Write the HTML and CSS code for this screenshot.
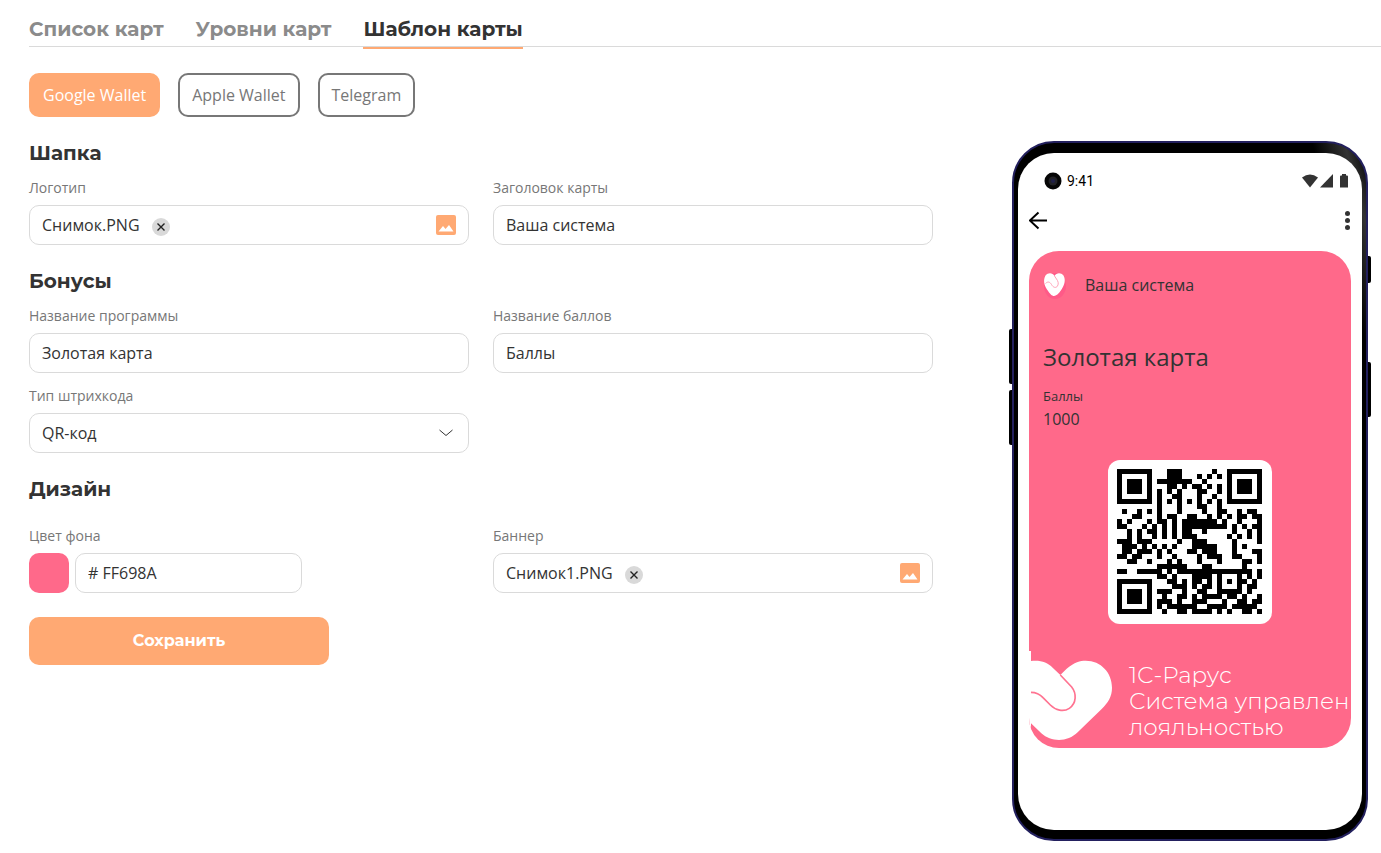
FILE: index.html
```html
<!DOCTYPE html>
<html lang="ru">
<head>
  <meta charset="UTF-8">
  <meta name="viewport" content="width=device-width, initial-scale=1.0">
  <title>Шаблон карты</title>
  <link rel="stylesheet" href="styles.css">
</head>
<body>
  <nav class="tabs">
    <a class="tab" href="#list">Список карт</a>
    <a class="tab" href="#levels">Уровни карт</a>
    <a class="tab tab-active" href="#template">Шаблон карты</a>
  </nav>

  <div class="wallets">
    <button class="wallet wallet-active" type="button">Google Wallet</button>
    <button class="wallet" type="button">Apple Wallet</button>
    <button class="wallet" type="button">Telegram</button>
  </div>

  <main class="content">
    <form class="form" id="templateForm">
      <!-- Шапка -->
      <h2>Шапка</h2>
      <div class="grid">
        <div class="field">
          <label for="logo">Логотип</label>
          <div class="file-box">
            <span>Снимок.PNG</span>
            <button class="clear" type="button" aria-label="Удалить логотип">
              <svg width="8" height="8" viewBox="0 0 8 8"><path d="M0.5 0.5 7.5 7.5M7.5 0.5 0.5 7.5"/></svg>
            </button>
            <label class="pick" for="logo" aria-label="Выбрать файл">
              <svg width="20" height="20" viewBox="0 0 20 20"><rect width="20" height="20" rx="2"/><path d="M2.5 16.5 7 11l2.500 3L13 10l4.500 6.500z"/></svg>
            </label>
            <input class="hidden-file" type="file" id="logo" name="logo">
          </div>
        </div>
        <div class="field">
          <label for="cardTitle">Заголовок карты</label>
          <input class="input" type="text" id="cardTitle" name="cardTitle" value="Ваша система">
        </div>
      </div>

      <!-- Бонусы -->
      <h2>Бонусы</h2>
      <div class="grid">
        <div class="field">
          <label for="program">Название программы</label>
          <input class="input" type="text" id="program" name="program" value="Золотая карта">
        </div>
        <div class="field">
          <label for="points">Название баллов</label>
          <input class="input" type="text" id="points" name="points" value="Баллы">
        </div>
        <div class="field">
          <label for="barcode">Тип штрихкода</label>
          <div class="select-box">
            <select class="input" id="barcode" name="barcode">
              <option>QR-код</option>
            </select>
            <svg class="chevron" width="14" height="8" viewBox="0 0 14 8"><path d="M0.5 1 7 6.500 13.500 1"/></svg>
          </div>
        </div>
      </div>

      <!-- Дизайн -->
      <h2 class="design-title">Дизайн</h2>
      <div class="grid">
        <div class="field">
          <label for="colorHex">Цвет фона</label>
          <div class="color-row">
            <input class="swatch" type="color" id="color" name="color" value="#ff698a" aria-label="Выбрать цвет">
            <input class="input hex" type="text" id="colorHex" name="colorHex" value="# FF698A">
          </div>
        </div>
        <div class="field">
          <label for="banner">Баннер</label>
          <div class="file-box">
            <span>Снимок1.PNG</span>
            <button class="clear" type="button" aria-label="Удалить баннер">
              <svg width="8" height="8" viewBox="0 0 8 8"><path d="M0.5 0.5 7.5 7.5M7.5 0.5 0.5 7.5"/></svg>
            </button>
            <label class="pick" for="banner" aria-label="Выбрать файл">
              <svg width="20" height="20" viewBox="0 0 20 20"><rect width="20" height="20" rx="2"/><path d="M2.5 16.5 7 11l2.500 3L13 10l4.500 6.500z"/></svg>
            </label>
            <input class="hidden-file" type="file" id="banner" name="banner">
          </div>
        </div>
      </div>

      <button class="save" type="submit">Сохранить</button>
    </form>

    <!-- Предпросмотр карты -->
    <aside class="phone">
      <i class="key key-up"></i>
      <i class="key key-down"></i>
      <i class="key key-power"></i>
      <i class="key key-side"></i>
      <div class="screen">
        <div class="status">
          <svg width="18" height="18" viewBox="0 0 18 18"><circle cx="9" cy="9" r="8.500" fill="#050505"/><circle cx="9" cy="9" r="4.500" fill="#222226"/><circle cx="9" cy="9" r="2" fill="#20204a"/></svg>
          <span class="time">9:41</span>
          <svg class="status-icons" width="46" height="14" viewBox="0 0 46 14">
            <path d="M0 3.500Q8 -2.500 16 3.500L8 13.500z"/>
            <path d="M31 0v13.500H18z"/>
            <path d="M38 2.500q0-1 1-1h1V0h4v1.500h1q1 0 1 1v11h-8z"/>
          </svg>
        </div>
        <div class="bar">
          <svg width="20" height="20" viewBox="0 0 20 20"><path d="M9.500 2.500 0.800 10.500 9.500 18.500M0.800 10.500H18" fill="none" stroke="#000" stroke-width="2"/></svg>
          <svg width="6" height="20" viewBox="0 0 6 20" fill="#333"><circle cx="3.500" cy="3.500" r="2.500"/><circle cx="3.500" cy="10.500" r="2.500"/><circle cx="3.500" cy="17.500" r="2.500"/></svg>
        </div>

        <section class="card">
          <div class="card-head">
            <svg width="24" height="28" viewBox="0 0 24 28">
              <ellipse cx="12" cy="15" rx="11" ry="13" fill="#ff5a88"/>
              <path d="M11.500 5C9.500 1.500 5 1.500 2.500 4.500C0 9 1 14 4 18.500C7 23 9 25 11 25C13 25 15.500 23 18.500 18.500C21.500 14 23 9 20.500 4.500C18 1.500 13.500 1.500 11.500 5z" fill="#fff"/>
              <path d="M2.500 12.500C5 10 7 11 8.500 13.500C10 16.500 13 17.500 14.500 15C16 12.500 15 10 13.500 8L11.500 5" fill="none" stroke="#ffa3b8"/>
            </svg>
            <span>Ваша система</span>
          </div>
          <div class="card-name">Золотая карта</div>
          <div class="card-label">Баллы</div>
          <div class="card-points">1000</div>
          <div class="qr">
            <svg id="qr" width="145" height="145" viewBox="0 0 29 29" shape-rendering="crispEdges"></svg>
          </div>
          <div class="banner">
            <svg width="82" height="97" viewBox="93 33 246 291">
              <path d="M93 63C124 60 142 68 158 83L181 105L200 86C224 66 240 62 257 62C303 62 336 98 336 143C336 170 324 188 305 207L233 277C203 307 154 307 124 280L93 250z" fill="#fff"/>
              <path d="M93 157C111 157 119 162 129 173L151 195C167 211 190 217 208 205C230 190 230 160 215 141L181 105" fill="none" stroke="#ff7391" stroke-width="5"/>
            </svg>
            <p>1С-Рарус<br>Система управлен<br>лояльностью</p>
          </div>
        </section>
      </div>
    </aside>
  </main>

  <script src="script.js"></script>
</body>
</html>
```
FILE: styles.css
```css
* {
  box-sizing: border-box;
}

body {
  margin: 0;
  padding: 0 0 12px 29px;
  font-family: "Open Sans", "Noto Sans", sans-serif;
  font-size: 16px;
  color: #333;
  background-color: #fff;
}

button,
input,
select {
  font: inherit;
  color: inherit;
}

svg {
  display: block;
  flex: none;
}

/* Вкладки */
.tabs {
  display: flex;
  gap: 32px;
  height: 47px;
  padding-top: 14px;
  border-bottom: 1px solid #dadada;
}

.tab {
  height: 35px;
  font-family: Montserrat, Inter, sans-serif;
  font-size: 20px;
  font-weight: 700;
  line-height: 30px;
  color: #8b8b8b;
  text-decoration: none;
  white-space: nowrap;
}

.tab-active {
  color: #333;
  border-bottom: 2px solid #ffa973;
}

.wallets {
  display: flex;
  gap: 18px;
  margin: 26px 0 24px;
}

.wallet {
  height: 44px;
  padding: 0 12px;
  border: 2px solid #777;
  border-radius: 10px;
  background-color: #fff;
  color: #777;
  cursor: pointer;
}

.wallet-active {
  border-color: #ffa973;
  background-color: #ffa973;
  color: #fff;
}

.content {
  display: flex;
  justify-content: space-between;
  align-items: flex-start;
  gap: 24px;
}

/* Форма */
.form {
  flex: 1;
  max-width: 904px;
}

h2 {
  margin: 0 0 13px;
  font-family: Montserrat, Inter, sans-serif;
  font-size: 20px;
  font-weight: 700;
  line-height: 24px;
}

.design-title {
  margin-bottom: 25px;
}

.grid {
  display: grid;
  grid-template-columns: 1fr 1fr;
  gap: 13px 24px;
  margin-bottom: 24px;
}

.field > label {
  display: block;
  margin-bottom: 7px;
  font-size: 14px;
  line-height: 20px;
  color: #777;
}

.input,
.file-box {
  width: 100%;
  height: 40px;
  padding: 0 12px;
  border: 1px solid #dadada;
  border-radius: 10px;
  background-color: #fff;
}

.file-box {
  display: flex;
  align-items: center;
  position: relative;
}

.clear {
  display: flex;
  align-items: center;
  justify-content: center;
  width: 18px;
  height: 18px;
  margin: 3px 0 0 12px;
  padding: 0;
  border: none;
  border-radius: 50%;
  background-color: #d9d9d9;
  cursor: pointer;
}

.clear path {
  stroke: #222;
  stroke-width: 1.4;
}

.pick {
  margin-left: auto;
  cursor: pointer;
}

.pick rect {
  fill: #ffa973;
}

.pick path {
  fill: #fff;
}

.hidden-file {
  position: absolute;
  width: 1px;
  height: 1px;
  opacity: 0;
}

.select-box {
  position: relative;
}

select.input {
  appearance: none;
}

.chevron {
  position: absolute;
  right: 16px;
  top: 16px;
  fill: none;
  stroke: #333;
  pointer-events: none;
}

.color-row {
  display: flex;
  gap: 6px;
}

.swatch {
  width: 40px;
  height: 40px;
  padding: 0;
  border: none;
  border-radius: 10px;
  background-color: #ff698a;
  overflow: hidden;
  cursor: pointer;
}

.swatch::-webkit-color-swatch-wrapper {
  padding: 0;
}

.swatch::-webkit-color-swatch {
  border: none;
}

.hex {
  width: 227px;
}

.save {
  width: 300px;
  height: 48px;
  padding: 0 0 2px;
  border: none;
  border-radius: 10px;
  background-color: #ffa973;
  color: #fff;
  font-family: Montserrat, Inter, sans-serif;
  font-weight: 700;
  cursor: pointer;
}

/* Телефон */
.phone {
  position: relative;
  flex: none;
  width: 356px;
  margin-right: 13px;
  padding: 10px 4px 9px;
  border: 2px solid #23205e;
  border-radius: 42px;
  background: linear-gradient(75deg, #000 90%, #333 96%, #000);
}

.key {
  position: absolute;
  width: 3px;
  background-color: #000;
}

.key-up,
.key-down {
  left: -5px;
  height: 55px;
  border-radius: 2px 0 0 2px;
}

.key-up {
  top: 186px;
}

.key-down {
  top: 247px;
}

.key-power,
.key-side {
  right: -5px;
  border-radius: 0 2px 2px 0;
}

.key-power {
  top: 113px;
  height: 27px;
}

.key-side {
  top: 219px;
  height: 55px;
}

.screen {
  padding: 17px 11px 82px;
  border-radius: 36px;
  background-color: #fff;
}

.status {
  display: flex;
  align-items: center;
  height: 22px;
  padding: 0 3px 0 15px;
}

.time {
  margin-left: 5px;
  font-family: Roboto, sans-serif;
  font-size: 14px;
  color: #000;
}

.status-icons {
  margin-left: auto;
  fill: #333;
}

.bar {
  display: flex;
  justify-content: space-between;
  align-items: center;
  margin: 18px 0 21px;
  padding-right: 1px;
}

.card {
  padding-top: 20px;
  border-radius: 30px;
  background-color: #ff698a;
  overflow: hidden;
}

.card-head {
  display: flex;
  align-items: center;
  gap: 18px;
  padding-left: 14px;
}

.card-name {
  margin: 42px 14px 14px;
  font-size: 24px;
  line-height: 32px;
}

.card-label {
  margin: 0 14px 2px;
  font-size: 13px;
  line-height: 18px;
}

.card-points {
  margin: 0 14px;
  line-height: 24px;
}

.qr {
  width: 164px;
  height: 164px;
  margin: 29px auto 27px;
  padding: 9px;
  border-radius: 12px;
  background-color: #fff;
}

.banner {
  display: flex;
  align-items: center;
  gap: 16px;
  border-left: 2px solid #fff;
}

.banner p {
  margin: 0;
  padding-top: 2px;
  font-family: Montserrat, Inter, sans-serif;
  font-size: 23px;
  font-weight: 300;
  line-height: 26px;
  color: #fff;
  white-space: nowrap;
}
```
FILE: script.js
```js
// Матрица QR-кода, 29 x 29
const rows = [
  '11111110001110000001001111111',
  '10000010001110001010101000001',
  '10111010111111100100001011101',
  '10111010001101011010101011101',
  '10111010101010001100101011101',
  '10000010100110001001001000001',
  '11111110101010101010101111111',
  '00000000100010001100100000000',
  '01001010100010000100110010110',
  '00011000101100110010101011011',
  '10100010110101111111010010001',
  '11000101010101111111110101011',
  '00101011010101100100000100101',
  '00101001010101110000001010101',
  '11101110000010011100000100001',
  '01110101010100011111000101000',
  '01101110101000110111000100011',
  '11011000100100001011100110001',
  '00110010001010001000100001101',
  '00000000111111000110000001000',
  '11001111101011111111111111101',
  '00000000110100011110100010101',
  '11111110001101011010101011010',
  '10000010000111010110100010110',
  '10111010111001001100111110100',
  '10111010010011010111101101001',
  '10111010111010011100010011011',
  '10000010101111110011110111110',
  '11111110010011011110101001101'
];

const qr = document.getElementById('qr');
let d = '';

rows.forEach((row, y) => {
  [...row].forEach((cell, x) => {
    if (cell === '1') d += `M${x} ${y}h1v1h-1z`;
  });
});

qr.innerHTML = `<path d="${d}"/>`;
```
